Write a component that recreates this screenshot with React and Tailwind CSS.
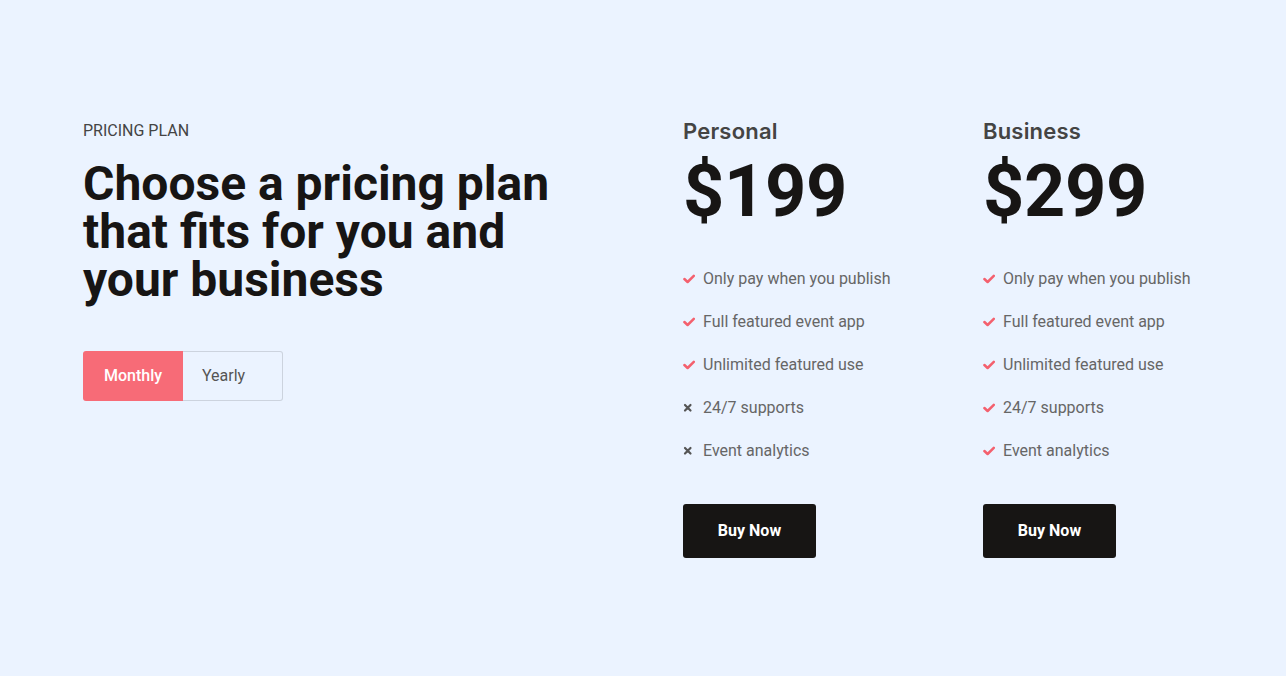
import React from "react";

const Check = () => (
  <svg width="12" height="10" viewBox="0 0 12 10" className="shrink-0">
    <path d="M1.4 5 L4.6 8 L10.8 1.8" fill="none" stroke="#f4606e" strokeWidth="2.5" strokeLinecap="round" strokeLinejoin="round" />
  </svg>
);

const Cross = () => (
  <svg width="12" height="10" viewBox="0 0 12 10" className="shrink-0">
    <path d="M2 2 L7.5 7.5 M7.5 2 L2 7.5" fill="none" stroke="#555" strokeWidth="2.2" strokeLinecap="round" />
  </svg>
);

const Plan = ({ name, price, features }) => (
  <div className="w-[300px] flex flex-col">
    <div className="text-[22px] leading-[30px] font-semibold text-[#444] tracking-[0.2px]" style={{ fontFamily: "Inter, 'Open Sans', sans-serif" }}>{name}</div>
    <div className="mt-[10px] text-[72px] leading-[72px] font-bold text-[#171514] tracking-[-0.3px]" style={{ fontFamily: "Roboto, sans-serif" }}>{price}</div>
    <ul className="mt-[39px] flex flex-col gap-[19px]">
      {features.map(([t, ok]) => (
        <li key={t} className="flex items-center gap-[8px] h-[24px] text-[16px] text-[#666]">
          <span className="w-[12px] flex justify-start">{ok ? <Check /> : <Cross />}</span>
          <span>{t}</span>
        </li>
      ))}
    </ul>
    <button className="mt-[41px] w-[133px] h-[54px] rounded-[3px] bg-[#171514] text-white text-[16px] font-bold">Buy Now</button>
  </div>
);

export default function App() {
  return (
    <div className="min-h-[676px] w-full bg-[#ebf3ff] flex pl-[83px] pt-[116px]" style={{ fontFamily: "Roboto, sans-serif" }}>
      <div className="w-[600px] flex flex-col">
        <div className="mt-[4px] text-[16px] leading-[22px] text-[#444] uppercase">Pricing Plan</div>
        <h1 className="mt-[18px] text-[48px] leading-[48px] font-bold text-[#171514] w-[490px]">
          Choose a pricing plan that fits for you and your business
        </h1>
        <div className="mt-[47px] flex w-[200px] h-[50px]">
          <button className="w-[100px] h-full bg-[#f76b77] text-white text-[16px] font-medium rounded-l-[3px]">Monthly</button>
          <button className="w-[100px] h-full border border-[#ccd3de] border-l-0 rounded-r-[3px] text-[16px] text-[#555] text-left pl-[19px]">Yearly</button>
        </div>
      </div>
      <Plan
        name="Personal"
        price="$199"
        features={[
          ["Only pay when you publish", true],
          ["Full featured event app", true],
          ["Unlimited featured use", true],
          ["24/7 supports", false],
          ["Event analytics", false],
        ]}
      />
      <Plan
        name="Business"
        price="$299"
        features={[
          ["Only pay when you publish", true],
          ["Full featured event app", true],
          ["Unlimited featured use", true],
          ["24/7 supports", true],
          ["Event analytics", true],
        ]}
      />
    </div>
  );
}
